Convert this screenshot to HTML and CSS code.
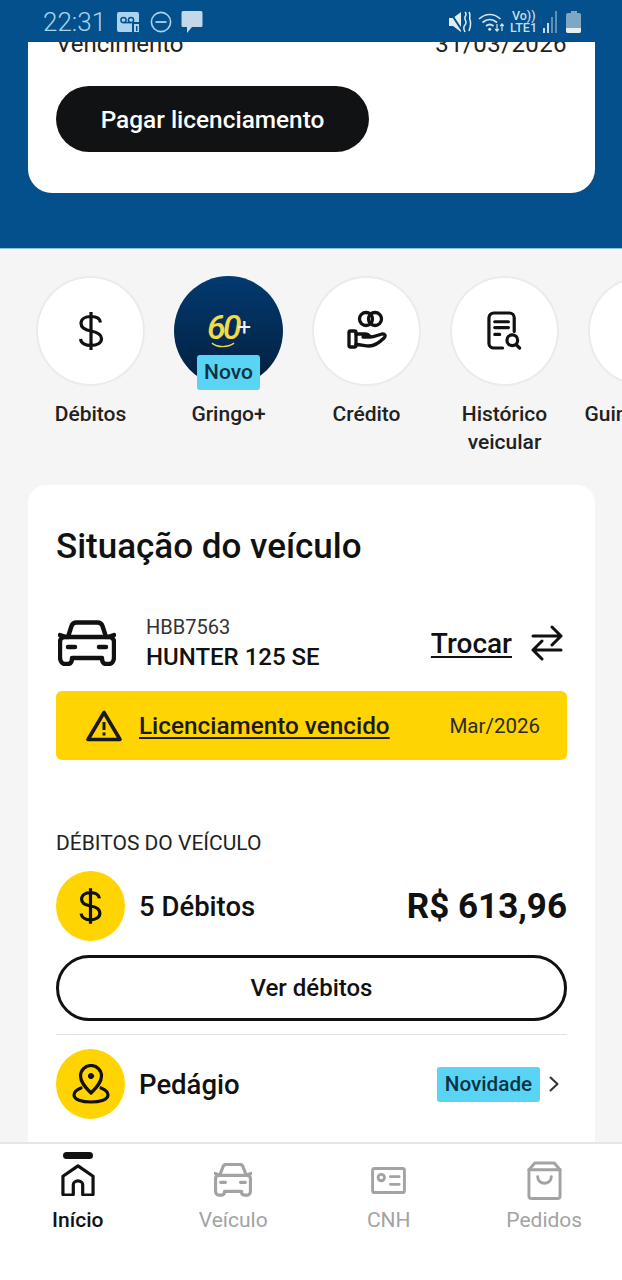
FILE: index.html
```html
<!DOCTYPE html>
<html lang="pt-BR">
<head>
  <meta charset="UTF-8" />
  <meta name="viewport" content="width=device-width, initial-scale=1.0"/>
  <title>Início</title>
  <link rel="stylesheet" href="styles.css">
</head>
<body>

  <header class="status-bar">
    <div class="status-left">
      <span class="clock">22:31</span>
      <svg class="st-voicemail" viewBox="0 0 24 22"><rect x="0" y="1" width="22" height="20" rx="2" fill="#a9d3ee"/><circle cx="6.5" cy="9" r="2.6" fill="none" stroke="#03508c" stroke-width="1.5"/><circle cx="14" cy="9" r="2.6" fill="none" stroke="#03508c" stroke-width="1.5"/><path d="M6.5 11.6h7.5" stroke="#03508c" stroke-width="1.5"/><rect x="15" y="11" width="9" height="11" rx="1" fill="#03508c"/><rect x="17" y="13" width="5" height="8" fill="#a9d3ee"/><rect x="19" y="15" width="1.5" height="5" fill="#03508c"/></svg>
      <svg class="st-dnd" viewBox="0 0 22 22"><circle cx="11" cy="11" r="9.6" fill="none" stroke="#a9d3ee" stroke-width="1.6"/><path d="M5.5 11h11" stroke="#a9d3ee" stroke-width="1.8"/></svg>
      <svg class="st-msg" viewBox="0 0 22 24"><path d="M2 1h18a1.500 1.500 0 0 1 1.500 1.500v13a1.500 1.500 0 0 1-1.500 1.500h-9l-5 6v-6H2a1.500 1.500 0 0 1-1.500-1.500v-13A1.500 1.500 0 0 1 2 1z" fill="#c3d9e8"/></svg>
    </div>
    <div class="status-right">
      <svg class="st-mute" viewBox="0 0 23 22"><path d="M0 7h4l8-6v20l-8-6H0z" fill="#e3edf4"/><path d="M1 1l13 20" stroke="#03508c" stroke-width="2"/><path d="M16 1c3 3-1 4 0 7s2 4 0 6-1 5 0 7M20 1c2 3 0 5 1 8s1 6-1 11" fill="none" stroke="#e3edf4" stroke-width="1.500"/></svg>
      <svg class="st-wifi" viewBox="0 0 26 19"><path d="M1 6c6.500-6 15-6 21.500 0M4.500 9.500c4.500-4 10-4 14.500 0M8 13c2.500-2 5-2 7.500 0" fill="none" stroke="#d2e3ee" stroke-width="1.700"/><circle cx="11.700" cy="16.200" r="1.500" fill="#d2e3ee"/><path d="M19 11v7m-1.800-2l1.800 2 1.800-2M24 18v-7m-1.800 2l1.800-2 1.800 2" fill="none" stroke="#d2e3ee" stroke-width="1.200"/></svg>
      <div class="st-volte"><span>Vo))</span><span>LTE1</span></div>
      <div class="st-signal">
        <i class="bar-1"></i><i class="bar-2"></i><i class="bar-3 dim"></i><i class="bar-4 dim"></i>
      </div>
      <div class="st-battery"><i class="cap"></i><i class="body"><b></b></i></div>
    </div>
  </header>

  <main class="scroller">
    <section class="hero">
      <div class="hero-card">
        <div class="due-row">
          <span>Vencimento</span>
          <span class="due-date">31/03/2026</span>
        </div>
        <button class="btn-dark">Pagar licenciamento</button>
      </div>
    </section>

    <section class="shortcuts">
      <div class="shortcut">
        <div class="circle">
          <svg class="ic-dollar" viewBox="0 0 28 40"><path d="M23.500 11.500C23 7.500 19 5.500 14 5.500c-5.500 0-10 2.500-10 7 0 4.500 4 6.300 10 7.500 6 1.200 10.500 3 10.500 7.500 0 4.500-4.500 7-10.500 7-5.500 0-10-2.300-10.500-6.500M14 1v38" fill="none" stroke="#111" stroke-width="3.200"/></svg>
        </div>
        <span class="shortcut-label">Débitos</span>
      </div>
      <div class="shortcut">
        <div class="circle circle-gringo">
          <div class="logo60"><em>60</em><span>+</span></div>
          <svg class="logo-smile" viewBox="0 0 26 6"><path d="M1 1c6 5 17 5 24 0" fill="none" stroke="#f2d94a" stroke-width="1.500"/></svg>
          <span class="badge-novo">Novo</span>
        </div>
        <span class="shortcut-label">Gringo+</span>
      </div>
      <div class="shortcut">
        <div class="circle">
          <svg class="ic-credit" viewBox="0 0 40 40" fill="none" stroke="#111" stroke-width="3.300" stroke-linejoin="round" stroke-linecap="round"><circle cx="19" cy="9" r="6.500"/><circle cx="28" cy="9" r="6.500"/><rect x="2" y="21" width="7" height="16" rx="1.500"/><path d="M9 24h9c3 0 4 1 5 3h-7m7 0c4 0 8-2 12-3 3-.5 4 2 2 4-4 4-9 8-15 8-4 0-8-1.500-13-1.500"/></svg>
        </div>
        <span class="shortcut-label">Crédito</span>
      </div>
      <div class="shortcut">
        <div class="circle">
          <svg class="ic-history" viewBox="0 0 36 40" fill="none" stroke="#111" stroke-width="3.300" stroke-linecap="round"><path d="M16 38H7a5 5 0 0 1-5-5V7a5 5 0 0 1 5-5h16a5 5 0 0 1 5 5v14"/><path d="M8 11h14M8 17h14M8 24h5"/><circle cx="26" cy="30" r="5.500"/><path d="M30 34.500l3.500 3.500"/></svg>
        </div>
        <span class="shortcut-label">Histórico veicular</span>
      </div>
      <div class="shortcut">
        <div class="circle"></div>
        <span class="shortcut-label label-cut">Guincho</span>
      </div>
    </section>

    <section class="vehicle-card">
      <h2>Situação do veículo</h2>

      <div class="vehicle-row">
        <svg class="ic-car" viewBox="0 0 58 46" fill="none" stroke="#111" stroke-width="4.400" stroke-linejoin="round" stroke-linecap="round"><path d="M10 17l3.500-11c.7-2 2-3.500 5-3.500h21c3 0 4.300 1.500 5 3.500L48 17"/><path d="M2 15l6 2M56 15l-6 2"/><path d="M7 17h44c3 0 5 2 5 5v15c0 4-2 7-5 7h-3c-3 0-4-2-4-6H14c0 4-1 6-4 6H7c-3 0-5-3-5-7V22c0-3 2-5 5-5z"/><path d="M10 27h7M41 27h7" stroke-width="4.500"/></svg>
        <div class="vehicle-info">
          <span class="plate">HBB7563</span>
          <span class="model">HUNTER 125 SE</span>
        </div>
        <a class="swap-link">Trocar</a>
        <svg class="ic-swap" viewBox="0 0 32 36" fill="none" stroke="#111" stroke-width="3" stroke-linecap="round" stroke-linejoin="round"><path d="M2 11h28M21 2l9 9-9 9M30 25H2M11 16l-9 9 9 9"/></svg>
      </div>

      <div class="alert">
        <svg class="ic-warning" viewBox="0 0 36 32" fill="none" stroke="#1a1a1a" stroke-width="3.600" stroke-linejoin="round"><path d="M18 2.500L2 29.500h32z"/><path d="M18 12v8M18 22.500v3" stroke-width="3"/></svg>
        <a class="alert-title">Licenciamento vencido</a>
        <span class="alert-date">Mar/2026</span>
      </div>

      <h3 class="section-label">DÉBITOS DO VEÍCULO</h3>

      <div class="debit-row">
        <div class="yellow-dot">
          <svg class="ic-dollar-sm" viewBox="0 0 28 42"><path d="M24 12.500C23.500 8.500 19.500 6 14 6 8 6 4 9 4 13.500c0 4.500 4 6.500 10 7.500 6 1 10.500 3 10.500 8 0 4.500-4.500 7.500-10.500 7.500-5.500 0-10-2.500-10.500-7M14 1v40" fill="none" stroke="#111" stroke-width="3.600"/></svg>
        </div>
        <span class="row-title">5 Débitos</span>
        <strong class="amount">R$ 613,96</strong>
      </div>

      <button class="btn-outline">Ver débitos</button>

      <div class="toll-row">
        <div class="yellow-dot">
          <svg class="ic-toll" viewBox="0 0 38 40" fill="none" stroke="#111" stroke-width="3.200" stroke-linecap="round" stroke-linejoin="round"><path d="M19 29C13 23 8.500 18 8.500 12a10.500 10.500 0 0 1 21 0c0 6-4.500 11-10.500 17z"/><circle cx="19" cy="12" r="2.600" fill="#111" stroke-width="1"/><path d="M9 24c-4 1.500-7 3.500-7 7 0 4.500 8 7 17 7s17-2.500 17-7c0-3.500-3-5.500-7-7"/></svg>
        </div>
        <span class="row-title">Pedágio</span>
        <span class="badge-new">Novidade</span>
        <svg class="ic-chevron" viewBox="0 0 10 16" fill="none" stroke="#333" stroke-width="2" stroke-linecap="round" stroke-linejoin="round"><path d="M1.500 1.500L8.500 8l-7 6.500"/></svg>
      </div>
    </section>
  </main>

  <nav class="tabbar">
    <div class="tab active">
      <i class="tab-mark"></i>
      <div class="tab-icon">
        <svg class="ic-home" viewBox="0 0 36 34" fill="none" stroke="#111" stroke-width="3.400" stroke-linejoin="round"><path d="M18 2L2 13v19a1 1 0 0 0 1 1h9a1 1 0 0 0 1-1V22c0-2 2-4 5-4s5 2 5 4v10a1 1 0 0 0 1 1h9a1 1 0 0 0 1-1V13z"/></svg>
      </div>
      <span>Início</span>
    </div>
    <div class="tab">
      <div class="tab-icon">
        <svg class="ic-navcar" viewBox="0 0 40 36" fill="none" stroke="#a3a3a3" stroke-width="3.400" stroke-linejoin="round" stroke-linecap="round"><path d="M6 13l3-8c.5-2 2-3.500 4-3.500h14c2 0 3.500 1.500 4 3.500l3 8"/><path d="M1 11l5 2M39 11l-5 2"/><path d="M5 13h30c2 0 3.500 1.500 3.500 3.500V29c0 3-1.500 5-3.500 5h-3c-2 0-3-1.500-3-4H11c0 2.500-1 4-3 4H5c-2 0-3.500-2-3.500-5V16.500C1.500 14.500 3 13 5 13z"/><path d="M7 20.500h5M28 20.500h5"/></svg>
      </div>
      <span>Veículo</span>
    </div>
    <div class="tab">
      <div class="tab-icon">
        <svg class="ic-cnh" viewBox="0 0 36 28" fill="none" stroke="#a3a3a3" stroke-width="3" stroke-linecap="round" stroke-linejoin="round"><rect x="1.500" y="1.500" width="33" height="25" rx="2"/><circle cx="10.500" cy="11" r="3.300"/><path d="M20 10h9M20 18h9"/></svg>
      </div>
      <span>CNH</span>
    </div>
    <div class="tab">
      <div class="tab-icon">
        <svg class="ic-bag" viewBox="0 0 36 40" fill="none" stroke="#a3a3a3" stroke-width="3" stroke-linecap="round" stroke-linejoin="round"><path d="M8 2h20l6 7v27a2.500 2.500 0 0 1-2.500 2.500h-27A2.500 2.500 0 0 1 2 36V9z"/><path d="M2 9h32"/><path d="M11 16c0 9 14 9 14 0"/></svg>
      </div>
      <span>Pedidos</span>
    </div>
  </nav>

</body>
</html>
```

FILE: styles.css
```css
* {
  box-sizing: border-box;
}
html, body {
  margin: 0;
  padding: 0;
}
body {
  width: 622px;
  height: 1280px;
  display: flex;
  flex-direction: column;
  overflow: hidden;
  font-family: Roboto, "Liberation Sans", sans-serif;
  color: #111;
  background: #f5f5f5;
}
button {
  font-family: inherit;
  cursor: pointer;
}

/* status bar */
.status-bar {
  flex: 0 0 42px;
  display: flex;
  justify-content: space-between;
  align-items: center;
  padding: 2px 41px 0 43px;
  background: #03508c;
}
.status-left, .status-right {
  display: flex;
  align-items: center;
}
.clock {
  font-size: 26px;
  font-weight: 300;
  color: #a9d3ee;
}
.st-voicemail {
  width: 24px;
  height: 22px;
  margin-left: 11px;
}
.st-dnd {
  width: 22px;
  height: 22px;
  margin-left: 9px;
}
.st-msg {
  width: 22px;
  height: 24px;
  margin-left: 9px;
}
.st-mute {
  width: 23px;
  height: 22px;
}
.st-wifi {
  width: 26px;
  height: 19px;
  margin-left: 6px;
}
.st-volte {
  display: flex;
  flex-direction: column;
  margin-left: 6px;
  font-size: 12.5px;
  line-height: 12px;
  font-weight: 500;
  color: #c6dcea;
  white-space: nowrap;
}
.st-volte span:first-child {
  padding-left: 2px;
}
.st-signal {
  display: flex;
  align-items: flex-end;
  gap: 2px;
  height: 22px;
  margin-left: 6px;
}
.st-signal i {
  width: 2px;
  background: #c6dcea;
}
.st-signal .dim {
  background: #5f8fb3;
}
.bar-1 { height: 5px; }
.bar-2 { height: 10px; }
.bar-3 { height: 16px; }
.bar-4 { height: 22px; }
.st-battery {
  display: flex;
  flex-direction: column;
  align-items: center;
  margin-left: 9px;
}
.st-battery .cap {
  width: 6px;
  height: 2px;
  background: #7fa7c4;
}
.st-battery .body {
  display: flex;
  align-items: flex-end;
  width: 15px;
  height: 20px;
  border-radius: 2px;
  background: #7fa7c4;
  overflow: hidden;
}
.st-battery b {
  width: 100%;
  height: 5px;
  background: #e3edf4;
}

/* scroll area */
.scroller {
  flex: 1;
  min-height: 0;
  overflow: hidden;
}
.hero {
  height: 207px;
  padding: 0 27px 55px 28px;
  background: #03508c;
  border-bottom: 1px solid #8fbcd8;
}
.hero-card {
  height: 151px;
  padding: 0 28px;
  overflow: hidden;
  background: #fff;
  border-radius: 0 0 24px 24px;
}
.due-row {
  display: flex;
  justify-content: space-between;
  height: 20px;
  margin-top: -10px;
  font-size: 24px;
  line-height: 24px;
  color: #222;
}
.due-date {
  letter-spacing: .4px;
}
.btn-dark {
  display: block;
  width: 313px;
  height: 66px;
  margin-top: 34px;
  border: 0;
  border-radius: 33px;
  background: #111214;
  color: #fff;
  font-size: 24.4px;
  font-weight: 500;
}

/* shortcuts */
.shortcuts {
  display: flex;
  gap: 29px;
  height: 236px;
  padding: 27px 0 0 36px;
  overflow: hidden;
}
.shortcut {
  flex: 0 0 109px;
  min-width: 0;
  display: flex;
  flex-direction: column;
  align-items: center;
}
.circle {
  position: relative;
  display: flex;
  align-items: center;
  justify-content: center;
  flex: 0 0 110px;
  width: 109px;
  border: 2px solid #ebebeb;
  border-radius: 50%;
  background: #fff;
}
.shortcut-label {
  width: 130px;
  margin-top: 14px;
  font-size: 21px;
  line-height: 28px;
  font-weight: 500;
  text-align: center;
  color: #222;
  flex-shrink: 0;
}
.label-cut {
  padding-left: 7px;
  text-align: left;
}
.ic-dollar {
  width: 28px;
  height: 40px;
}
.ic-credit {
  width: 40px;
  height: 40px;
  margin-top: -2px;
}
.ic-history {
  width: 35px;
  height: 39px;
  margin-top: -2px;
}
.circle-gringo {
  flex-direction: column;
  border: 0;
  background: linear-gradient(#033a70, #021f3d);
}
.logo60 {
  display: flex;
  align-items: center;
  margin: -2px 0 0 1px;
  line-height: 30px;
}
.logo60 em {
  font-size: 34px;
  font-weight: 500;
  letter-spacing: -3px;
  color: #f2d94a;
}
.logo60 span {
  margin-left: -1px;
  font-size: 24px;
  color: #eef2f5;
}
.logo-smile {
  width: 24px;
  height: 6px;
  margin-left: -12px;
}
.badge-novo {
  position: absolute;
  left: 23px;
  top: 79px;
  width: 63px;
  height: 35px;
  border-radius: 3px;
  background: #5ad4f5;
  font-size: 21px;
  line-height: 35px;
  font-weight: 500;
  text-align: center;
  color: #0c3346;
}

/* vehicle card */
.vehicle-card {
  margin: 0 27px 0 28px;
  height: 700px;
  padding: 42px 28px 0;
  background: #fff;
  border-radius: 18px;
}
.vehicle-card h2 {
  margin: 0;
  font-size: 35px;
  line-height: 40px;
  font-weight: 500;
}
.vehicle-row {
  display: flex;
  align-items: center;
  height: 60px;
  margin-top: 46px;
}
.ic-car {
  width: 58px;
  height: 46px;
  margin-left: 2px;
}
.vehicle-info {
  display: flex;
  flex-direction: column;
  margin-left: 30px;
}
.plate {
  font-size: 20px;
  line-height: 28px;
  color: #333;
}
.model {
  font-size: 24px;
  line-height: 32px;
  font-weight: 500;
}
.swap-link {
  margin-left: auto;
  font-size: 28px;
  font-weight: 500;
  text-decoration: underline;
  text-underline-offset: 3px;
}
.ic-swap {
  width: 32px;
  height: 36px;
  margin: 0 4px 0 19px;
}
.alert {
  display: flex;
  align-items: center;
  height: 69px;
  margin-top: 18px;
  padding: 0 27px 0 30px;
  background: #ffd400;
  border-radius: 6px;
}
.ic-warning {
  width: 36px;
  height: 32px;
}
.alert-title {
  margin-left: 17px;
  font-size: 24.3px;
  font-weight: 500;
  text-decoration: underline;
  text-underline-offset: 3px;
  color: #1a1a1a;
}
.alert-date {
  margin-left: auto;
  font-size: 20.5px;
  color: #2a2a2a;
}
.section-label {
  margin: 70px 0 0;
  font-size: 21px;
  line-height: 26px;
  font-weight: 400;
  color: #222;
}
.debit-row, .toll-row {
  display: flex;
  align-items: center;
}
.debit-row {
  margin-top: 15px;
}
.yellow-dot {
  display: flex;
  align-items: center;
  justify-content: center;
  width: 69px;
  height: 70px;
  border-radius: 50%;
  background: #ffd400;
}
.ic-dollar-sm {
  width: 25px;
  height: 38px;
}
.ic-toll {
  width: 38px;
  height: 40px;
}
.row-title {
  margin-left: 14px;
  font-size: 27.5px;
  font-weight: 500;
}
.amount {
  margin-left: auto;
  font-size: 35px;
  font-weight: 700;
}
.btn-outline {
  display: block;
  width: 100%;
  height: 66px;
  margin-top: 14px;
  border: 3px solid #111;
  border-radius: 33px;
  background: #fff;
  color: #111;
  font-size: 24px;
  font-weight: 500;
}
.toll-row {
  margin-top: 13px;
  padding-top: 14px;
  border-top: 1px solid #e2e2e2;
}
.badge-new {
  margin-left: auto;
  width: 103px;
  height: 35px;
  border-radius: 3px;
  background: #5ad4f5;
  font-size: 20.7px;
  line-height: 35px;
  font-weight: 500;
  text-align: center;
  color: #0c3346;
}
.ic-chevron {
  width: 10px;
  height: 16px;
  margin: 0 8px 0 9px;
}

/* bottom tabs */
.tabbar {
  flex: 0 0 138px;
  display: flex;
  background: #fff;
  border-top: 2px solid #e6e6e6;
}
.tab {
  position: relative;
  flex: 1;
  display: flex;
  flex-direction: column;
  align-items: center;
  padding-top: 14px;
  font-size: 21px;
  line-height: 26px;
  color: #a3a3a3;
}
.tab.active {
  font-weight: 500;
  color: #111;
}
.tab-icon {
  display: flex;
  align-items: center;
  height: 44px;
  margin-bottom: 5px;
}
.tab-mark {
  position: absolute;
  top: 8px;
  width: 30px;
  height: 7px;
  border-radius: 4px;
  background: #111;
}
.ic-home {
  width: 34px;
  height: 32px;
}
.ic-navcar {
  width: 38px;
  height: 34px;
}
.ic-cnh {
  width: 35px;
  height: 27px;
}
.ic-bag {
  width: 35px;
  height: 39px;
}
```
